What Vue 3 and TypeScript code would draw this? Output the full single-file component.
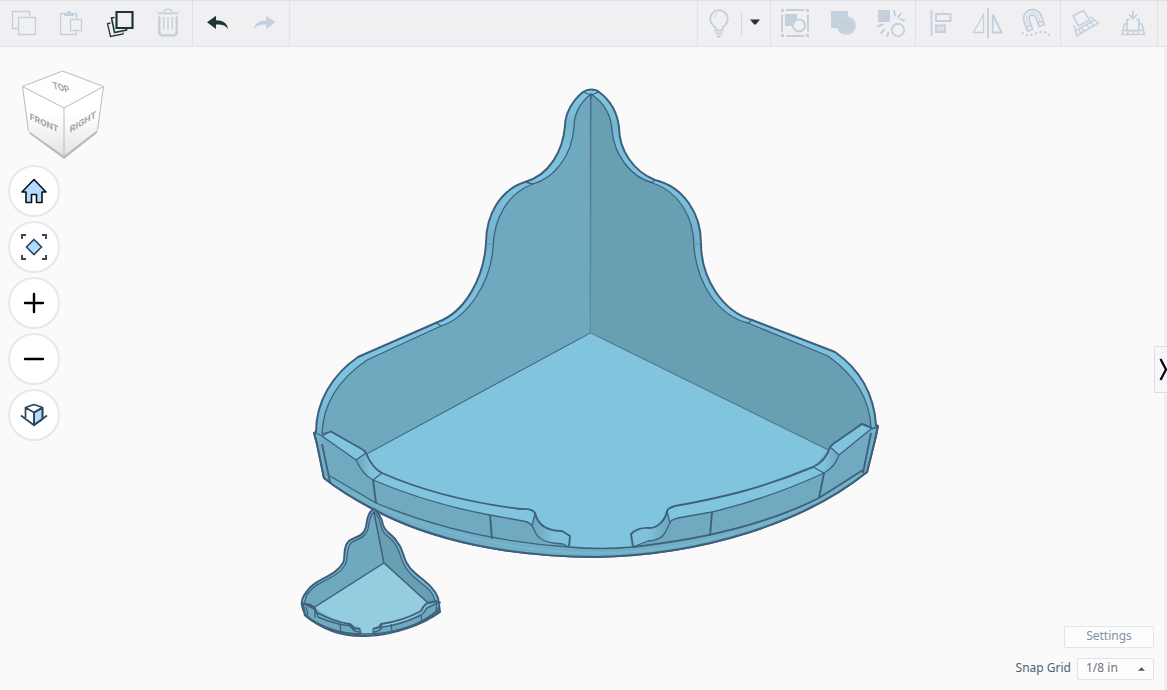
<script setup lang="ts">
import { computed, ref } from 'vue'

const snapOptions: string[] = ['1/16 in', '1/8 in', '1/4 in', '1/2 in']
const snapGrid = ref<string>('1/8 in')
const zoom = ref<number>(1)

const viewBox = computed<string>(() => {
  const width = 1164 / zoom.value
  const height = 643 / zoom.value
  return `${582 - width / 2} ${368.5 - height / 2} ${width} ${height}`
})

function zoomBy(factor: number): void {
  zoom.value = Math.min(4, Math.max(0.25, zoom.value * factor))
}
</script>

<template>
  <div class="editor">
    <header class="toolbar">
      <div class="group">
        <button class="tool" type="button" aria-label="Copy" disabled>
          <svg viewBox="0 1 48 45"><path d="M18.500 28.500h-6v-17h17v6M18.500 17.500h17v17h-17z" /></svg>
        </button>
        <button class="tool" type="button" aria-label="Paste" disabled>
          <svg viewBox="0 1 48 45">
            <path d="M22 34.500h-9.500v-21h4.500M24.500 13.500h4V19M22.500 19.500h11v11h-11zM22 34.500h6.500V31" />
            <path class="solid" d="M16 13h3c0-3 4-3 4 0h3v3h-10z" />
            <circle cx="21" cy="13" r="1" fill="#f0f0f2" />
          </svg>
        </button>
        <button class="tool active" type="button" aria-label="Duplicate and repeat">
          <svg viewBox="0 1 48 45">
            <path d="M20.500 12h16v16h-16z" stroke-width="2.200" />
            <path d="M18.500 17.500l-3 .5 3 14.500 12-2.500v-1" stroke-width="1.600" />
            <path d="M14.500 23l-3 .7 3 12.800 12.500-2.500v-1.500" stroke-width="1.300" />
          </svg>
        </button>
        <button class="tool" type="button" aria-label="Delete" disabled>
          <svg viewBox="0 1 48 45">
            <path d="M13.500 13.300h21" stroke-width="2" />
            <path d="M20 13c0-5 8-5 8 0M19.700 17v12.500M24 17v12.500M28.300 17v12.500" stroke-width="1.400" />
            <path d="M15.300 16.500V32q0 3.500 3.500 3.500h10.400q3.500 0 3.500-3.500V16.500" stroke-width="2.300" />
          </svg>
        </button>
      </div>
      <div class="group">
        <button class="tool active" type="button" aria-label="Undo">
          <svg viewBox="0 1 48 45"><path class="solid" d="M14 22.300 23 15.700v4.500c7 0 11.500 3 12 9-2.500-3.800-6-4.800-12-4.600V29z" /></svg>
        </button>
        <button class="tool" type="button" aria-label="Redo" disabled>
          <svg viewBox="0 1 48 45"><path class="solid" d="M34.300 22.300 25.300 15.700v4.500c-7 0-11.500 3-12 9 2.500-3.800 6-4.800 12-4.600V29z" /></svg>
        </button>
      </div>
      <div class="group tail">
        <button class="tool bulb" type="button" aria-label="Show all" disabled>
          <svg viewBox="0 1 43 45">
            <path d="M17.500 30.500v-3c-3-2.500-5.300-5-5.300-8.500a8.800 8.800 0 0 1 17.600 0c0 3.500-2.300 6-5.300 8.500v3z" stroke-width="1.900" />
            <path d="M16.500 17q1-2.500 3-3.300" stroke-width="1" />
            <path class="solid" d="M17 32.500h8l-.7 1.800h-6.600zM18 35.300h6q-1.500 2.700-3 2.700t-3-2.700z" />
          </svg>
        </button>
        <span class="divider"></span>
        <button class="tool active caret" type="button" aria-label="Visibility options">
          <svg viewBox="0 1 28 45"><path class="solid" d="M8 19.500h10l-4.200 5h-1.600z" /></svg>
        </button>
      </div>
      <div class="group">
        <button class="tool" type="button" aria-label="Group" disabled>
          <svg viewBox="0 1 48 45">
            <path d="M15 10h18M15 36h18M11 14.500v17M37 14.500v17" stroke-width="2" />
            <path class="solid" d="M10 9h3v3h-3zM35 9h3v3h-3zM10 34h3v3h-3zM35 34h3v3h-3zM14 14h12v5.500q-5 1.500-5 6.500h-7z" />
            <circle cx="28" cy="25.500" r="6" stroke-width="1.900" />
          </svg>
        </button>
        <button class="tool" type="button" aria-label="Union" disabled>
          <svg viewBox="0 1 48 45">
            <path class="solid" d="M12 11h17v17H12z" />
            <circle class="solid" cx="27.300" cy="25.500" r="9.500" />
            <circle cx="27.300" cy="25.500" r="7.800" class="ring" />
          </svg>
        </button>
        <button class="tool" type="button" aria-label="Ungroup" disabled>
          <svg viewBox="0 1 48 45">
            <path class="solid" d="M11 10h12v12H11z" />
            <circle cx="31" cy="30" r="6.200" stroke-width="1.900" />
            <path d="M27 11l1.300 4.500M33.700 13.500 31 17.300M37 20.500l-3.500-1.200M16 24.300l-5 2M17.300 29.700 14.300 33M21.300 32.500l-1 3.500" stroke-width="2" stroke-linecap="round" />
          </svg>
        </button>
      </div>
      <div class="group">
        <button class="tool" type="button" aria-label="Align" disabled>
          <svg viewBox="0 1 48 45">
            <path d="M15.500 10v26M20 14h14.500v7H20z" stroke-width="1.800" />
            <path d="M20 25.500h9v6.500h-9z" fill="#dae1e8" stroke-width="1.800" />
          </svg>
        </button>
        <button class="tool" type="button" aria-label="Mirror" disabled>
          <svg viewBox="0 1 48 45">
            <path d="M24 8v30.500" stroke-width="1.900" />
            <path d="M9.500 32.500h10v-18z" />
            <path d="M28.700 14.500v18h9z" stroke-width="1.900" />
          </svg>
        </button>
        <button class="tool" type="button" aria-label="Cruise" disabled>
          <svg viewBox="0 1 48 45">
            <g transform="translate(20.500 18.500) rotate(-20)">
              <path d="M-9 10V0a9 9 0 0 1 18 0v10H3.500V0a3.500 3.500 0 0 0-7 0v10zM-9 6h5.500M3.500 6H9" stroke-width="1.800" />
              <path d="M-6.200 5V0a6.200 6.200 0 0 1 12.400 0v5" stroke-width=".8" />
            </g>
            <path d="M10.700 33c3 3 6 3.200 11.500.8s11-3 14.800 1" stroke-width="2.400" stroke-linecap="round" stroke-dasharray=".1 4.600" />
          </svg>
        </button>
      </div>
      <div class="group">
        <button class="tool" type="button" aria-label="Workplane" disabled>
          <svg viewBox="0 1 48 45">
            <path d="M13 25 15.700 36 37.500 23 29 16.500M14 31 33.500 20M20 27l3.500 4.500M25 25l4.500 3M29 21l3 4M18 29l1.500 4.500" stroke-width="1.500" />
            <path class="sheet" d="M12 16 22.300 10.500 28.500 20 17.500 26z" stroke-width="1.600" />
          </svg>
        </button>
        <button class="tool" type="button" aria-label="Drop to workplane" disabled>
          <svg viewBox="0 1 48 45">
            <path d="M18 24h-2.500l-2.500 10.500h22.500L33 24h-3M14.500 30.500h19.500M19.500 30.500l-1 4M24 30.500v4M28.500 30.500l1 4" stroke-width="1.500" />
            <path d="M21 19.500h-3v11h12v-11h-3M24 11v7M20 14.500l4 4 4-4" stroke-width="1.700" />
          </svg>
        </button>
      </div>
      <div class="group end"></div>
    </header>

    <main class="stage">
      <svg class="scene" :viewBox="viewBox" role="img" aria-label="Corner shelf model on the workplane">
        <defs>
          <linearGradient id="rim" x1="0" y1="90" x2="0" y2="435" gradientUnits="userSpaceOnUse">
            <stop offset="0" stop-color="#83c9e4" /><stop offset=".1" stop-color="#76b7cf" />
            <stop offset=".25" stop-color="#80c6e1" /><stop offset=".44" stop-color="#74b2c9" />
            <stop offset=".65" stop-color="#7fc5e0" /><stop offset=".85" stop-color="#7ec3de" />
            <stop offset="1" stop-color="#74b2c9" />
          </linearGradient>
          <linearGradient id="notch" x1="0" x2="1">
            <stop offset="0" stop-color="#6ca5ba" /><stop offset=".6" stop-color="#80c2dc" />
          </linearGradient>
          <linearGradient id="notchRight" x1="1" x2="0">
            <stop offset="0" stop-color="#6ca5ba" /><stop offset=".6" stop-color="#80c2dc" />
          </linearGradient>
          <linearGradient id="corner" x1="0" y1="94" x2="0" y2="333" gradientUnits="userSpaceOnUse">
            <stop offset="0" stop-color="#40647f" /><stop offset=".4" stop-color="#4d7891" />
            <stop offset="1" stop-color="#5f90a8" />
          </linearGradient>
        </defs>

        <g class="shelf">
          <path class="outline" fill="url(#rim)" d="M591 89.500 C588 89.500 586 90 583 92 C573 100 565 113 565 126 C563 150 550 175 525 182 C500 190 486 215 486 243 C484 278 465 312 438 322 L358 357 C332 375 316 402 316 432 L314 433 L317 444 324 478 C340 491 354 499 373 509 C432 541 513 557 595 557 C704 555 805 522 867 472 L875 440 878 426 876 425 C874 395 862 371 835 352 L752 320 C722 311 701 278 701 243 C701 214 684 187 655 180 C633 171 619 150 619 127 C617 111 610 100 599 92 C597 90 594 89.500 591 89.500Z" />
          <path class="left-wall edge" d="M591 94 C581 102 574 113 574 127 C572 156 554 178 533 184 C508 193 494 218 493 247 C491 283 467 318 441 326 L367 360 C339 379 323 404 322 434 L330 432 367 454 590.500 333Z" />
          <path class="right-wall edge" d="M591 94 C603 102 611 114 612 130 C614 154 630 177 653 183 C677 191 694 215 694 247 C697 283 717 315 748 323 L828 356 C856 376 870 401 871 428 L861 424 828 450 590.500 333Z" />
          <path class="left-wall" d="M591 98 582 114V337L590.500 334Z" />
          <path class="right-wall" d="M591 98 600 114V337L590.500 334Z" />
          <path class="floor" d="M590.500 333 367 454 Q372 468 382 473 Q450 502 528 509 L535 513 C538 526 547 531 562 531 L570 536 569 548 Q600 550 633 548 L631 534 Q638 527 650 528 C656 528 665 522 667 511 L675 506 Q750 493 813 467 L828 450Z" />
          <path class="seam" d="M590.500 333 367 454" />
          <path class="seam soft" d="M590.500 333 828 450" />
          <path d="M591 94 590.500 333 590 333 590.400 94Z" fill="none" stroke="url(#corner)" stroke-width=".8" />

          <path class="base" d="M317 444 324 478 C340 491 354 499 373 509 C432 541 513 557 595 557 C704 555 805 522 867 472 L875 435 871 432 863 470 819 498 Q745 535 633 548 H569 Q465 540 376 503 L330 476 322 440Z" />
          <path class="front" d="M322 436 356 460 Q363 475 373 480 Q430 505 523 521 C540 523 529 544 563 544 L569 547 Q465 540 376 503 L330 476Z" />
          <path class="front" d="M871 429 839 455 Q835 468 824 473 Q760 500 678 518 C660 523 672 536 648 541 L633 547 Q745 535 819 498 L863 470Z" />
          <path class="gloss" d="M332 482C400 525 505 553 595 553S790 526 861 474" />
          <path class="outline hollow" d="M314 433 317 444 324 478 C340 491 354 499 373 509 C432 541 513 557 595 557 C704 555 805 522 867 472 L875 440 878 426" />

          <path class="lip" d="M322 435 332 431 360 448 Q364 450 366 453 Q372 468 382 473 C427 493 473 503 520 509 Q532 508 535 513 L532 526 Q529 521 523 521 L490 515 Q430 504 373 480 Q363 475 356 460Z" />
          <path fill="url(#notch)" d="M535 513 C538 526 547 531 562 531 L570 536 569 547 563 544 C545 544 535 538 535 531 L532 526Z" />
          <path class="lip" d="M871 428 862 424 833 444 830 447 Q826 461 813 467 C760 489 720 498 675 506 Q668 508 667 511 L670 523 Q674 519 678 518 L712 512 Q770 498 824 473 Q835 467 839 455Z" />
          <path fill="url(#notchRight)" d="M667 511 C665 522 656 528 650 528 Q638 527 631 534 L633 547 Q641 542 648 541 Q661 538 665 532 L670 523Z" />
          <path fill="url(#notch)" d="M366 453 356 460Q363 475 373 480L382 473Q372 468 366 453Z" />
          <path fill="url(#notchRight)" d="M830 447 839 455Q835 467 824 473L813 467Q826 461 830 447Z" />

          <path class="edge thick" d="M330 431 360 448Q364 450 366 453Q372 468 382 473C427 493 473 503 520 509Q532 508 535 513C538 526 547 531 562 531L570 536 569 547M872 428 862 424 833 444 830 447Q826 461 813 467C760 489 720 498 675 506Q668 508 667 511C665 522 656 528 650 528Q638 527 631 534L633 547" />
          <path class="edge" d="M314 432 322 436 356 460Q363 475 373 480Q430 504 490 515L523 521Q530 522 532 526C535 528 533 540 553 543L563 544 569 547M878 427 871 429 839 455Q835 467 824 473Q770 498 712 512L678 518Q670 520 670 523C665 532 665 540 648 541L633 547M322 436 332 431M356 460 366 453M373 480 382 473M532 526 535 513M839 455 830 447M824 473 813 467M670 523 667 511M871 429 878 426" />
          <path class="edge" d="M330 476 376 503Q465 540 569 547Q600 550 633 547" />
          <path class="edge thick" d="M322 444 330 482M633 547Q745 535 819 498L863 470M871 433 863 473M373 480 376 503M490 515 492 539M712 512 710 536M824 473 819 498" />
          <path class="edge" d="M583 92 591 95 599 92M525 182 533 184M655 180 651 183M435 322 441 326M752 320 748 323" />
          <path class="faint-edge" d="M486 243 493 245M701 242 694 245" />
        </g>

        <g class="shelf small">
          <path class="outline rim-fill" d="M374 509 C368 512 367 520 366 527 C363 538 353 537 349 541 C342 547 346 558 343 563 C335 577 315 579 308 590 C303 596 301 600 302 606 L305 615 C320 628 340 637 366 636 C395 635 424 624 440 612 L438 598 C435 588 424 581 415 573 C401 561 405 550 397 542 C393 534 386 534 383 525 C382 519 379 513 374 509Z" />
          <path class="left-wall edge" d="M374 512 C369 516 369 524 368 529 C364 540 355 539 351 543 C345 550 349 559 345 565 C337 579 317 581 310 591 Q304 597 305 606 L315 607 384 563Z" />
          <path class="right-wall edge" d="M374 512 C380 516 380 524 382 529 C385 537 392 537 395 544 C402 553 400 564 411 574 C420 584 434 589 435 602 L428 603 384 563Z" />
          <path class="pale-floor" d="M384 563 315 607 Q330 620 352 624 L361 628 363 634 H374 L374 629 Q404 625 421 612 L428 603Z" />
          <path class="edge" d="M384 563 315 607M384 563 428 603" />
          <path class="front edge" d="M303 603 314 609 Q318 614 318 617 Q334 624 351 626 Q353 632 360 632 L360 635 Q323 631 305 614Z" />
          <path class="front edge" d="M440 602 427 608 Q424 614 419 616 Q400 625 382 627 Q380 631 374 632 L375 635 Q412 631 438 610Z" />
          <path class="lip-line" d="M305 604 311 605Q316 608 316 612Q334 622 350 624L354 628 360 629M437 601 427 603Q423 606 421 611Q403 621 381 624L379 627 373 629" />
          <path class="edge" d="M315 610 315 618M340 625 341 633M391 624 392 632M421 615 422 622M348 624 355 631M382 624 379 631M360 629V633M373 629V633M304 615C320 629 340 634 365 634S422 625 439 611M437 601 436 612M306 607 308 615" />
        </g>
      </svg>

      <nav class="view-controls" aria-label="View controls">
        <svg class="view-cube" viewBox="8 63 112 98" role="img" aria-label="View cube">
          <defs>
            <linearGradient id="face" x1="0" y1="0" x2="0" y2="1">
              <stop offset=".4" stop-color="#fff" /><stop offset="1" stop-color="#e3e3e5" />
            </linearGradient>
          </defs>
          <path d="M28 128 64 151 98 127 97 133 64 159 30 134Z" fill="#b8b9bb" />
          <path d="M22.500 86.500 64 108V156L28.500 131Z" fill="url(#face)" />
          <path d="M103.500 86.500 64 108V156L97.500 130Z" fill="url(#face)" />
          <path d="M62.500 71 103.500 86.500 64 108 22.500 86.500Z" fill="#fefefe" />
          <path d="M62.500 71 22.500 86.500 28.500 131M62.500 71 103.500 86.500 97.500 130M22.500 86.500 64 108 103.500 86.500M64 108V156" fill="none" stroke="#b8babc" stroke-width="1" />
          <text transform="translate(62 91) rotate(16) skewX(30)">TOP</text>
          <text transform="translate(44 126) skewY(24)">FRONT</text>
          <text transform="translate(83 125) skewY(-31)">RIGHT</text>
        </svg>
        <button class="round" type="button" aria-label="Home view" @click="zoom = 1">
          <svg viewBox="0 0 52 52"><path d="M26 14.500 14 27h4v10.500h5.500V29.500h5v8H34V27h4z" fill="#b4dcff" stroke="#0c1115" stroke-width="1.600" stroke-linejoin="round" /></svg>
        </button>
        <button class="round" type="button" aria-label="Fit all in view">
          <svg viewBox="0 0 52 52" stroke="#2e475d" fill="none">
            <path d="M14 18v-4h4M34 14h4v4M38 34v4h-4M18 38h-4v-4" stroke-width="1.900" />
            <path d="M26 18.500 33.500 26 26 33.500 18.500 26z" fill="#b4dcff" stroke-width="1.600" />
          </svg>
        </button>
        <button class="round" type="button" aria-label="Zoom in" @click="zoomBy(1.25)">
          <svg viewBox="0 0 52 52"><path d="M17 26h18M26 17v18" stroke="#000" stroke-width="2.400" stroke-linecap="round" /></svg>
        </button>
        <button class="round" type="button" aria-label="Zoom out" @click="zoomBy(0.8)">
          <svg viewBox="0 0 52 52"><path d="M17 26h18" stroke="#000" stroke-width="2.400" stroke-linecap="round" /></svg>
        </button>
        <button class="round" type="button" aria-label="Switch to flat view">
          <svg viewBox="0 0 52 52" fill="none" stroke="#2e475d" stroke-width="1.700" stroke-linejoin="round">
            <path d="M26 23.500 34.500 19v11L26 36z" fill="#b4dcff" />
            <path d="M26 15.500 34.500 18.500 26 23.500 17.500 18.500zM17.500 18.500V30M34.500 18.500V30M26 23.500V36M13 26.500 26 36.300 39 26.500" />
          </svg>
        </button>
      </nav>

      <button class="handle" type="button" aria-label="Open shapes panel">
        <svg viewBox="0 0 12 45"><path d="M5.500 12 11 22.500 5.500 33" fill="none" stroke="#000" stroke-width="2.200" /></svg>
      </button>

      <div class="grid-controls">
        <button class="settings" type="button">Settings</button>
        <div class="snap">
          <label for="snap-grid">Snap Grid</label>
          <span class="select-wrap">
            <select id="snap-grid" v-model="snapGrid">
              <option v-for="option in snapOptions" :key="option" :value="option">{{ option }}</option>
            </select>
            <svg class="arrow" viewBox="0 0 8 4"><path d="M0 4 4 0 8 4z" fill="#4b5a66" /></svg>
          </span>
        </div>
      </div>
    </main>
  </div>
</template>

<style>
body {
  margin: 0;
  background: #fafafa;
}
</style>

<style scoped>
.editor {
  display: flex;
  flex-direction: column;
  min-height: 100vh;
  font-family: "Noto Sans", "Open Sans", sans-serif;
  background: #fafafa;
}
.toolbar {
  display: flex;
  box-sizing: border-box;
  border-top: 1px solid #dce2e7;
  border-bottom: 1px solid #dce2e7;
  background: #f0f0f2;
}
.group {
  display: flex;
  align-items: center;
  border-right: 1px solid #dce2e7;
}
.group.tail {
  margin-left: auto;
  border-left: 1px solid #dce2e7;
}
.group.end {
  width: 9px;
  border-right: 0;
}
.tool {
  width: 48px;
  height: 45px;
  padding: 0;
  border: 0;
  background: none;
  color: #c4d0db;
}
.tool.active {
  color: #213536;
  cursor: pointer;
}
.tool.bulb {
  width: 43px;
}
.tool.caret {
  width: 28px;
}
.tool svg,
.round svg,
.handle svg {
  display: block;
  width: 100%;
  height: 100%;
}
.tool svg {
  fill: none;
  stroke: currentColor;
  stroke-width: 1.3;
}
.tool .solid {
  fill: currentColor;
  stroke: none;
}
.tool .sheet {
  fill: #f0f0f2;
}
.tool .ring {
  stroke: #d3dce4;
  stroke-width: 1;
}
.divider {
  width: 1px;
  height: 24px;
  background: #d3dbe2;
}
.stage {
  position: relative;
  flex: 1;
  display: flex;
  min-height: 440px;
  border-right: 3px solid #f0f0f2;
}
.scene {
  flex: 1;
  min-width: 0;
  width: 100%;
  max-height: calc(100vh - 47px);
}
.shelf {
  stroke-linejoin: round;
}
.outline {
  stroke: #3d5f7d;
  stroke-width: 2;
}
.hollow {
  fill: none;
}
.edge {
  fill: none;
  stroke: #3f617c;
  stroke-width: 1.3;
}
.thick {
  stroke-width: 1.9;
}
.left-wall {
  fill: #6fa9bf;
}
.right-wall {
  fill: #689fb2;
}
.floor,
.lip {
  fill: #81c4de;
}
.front {
  fill: #70aac0;
}
.front.edge {
  stroke-width: 1.5;
}
.base {
  fill: #71afc7;
}
.gloss {
  fill: none;
  stroke: #7fb9cf;
  stroke-width: 1;
}
.seam {
  fill: none;
  stroke: #4d7088;
  stroke-width: 1;
}
.seam.soft {
  stroke: #5b8299;
}
.faint-edge {
  stroke: #5d93ad;
}
.rim-fill {
  fill: #78b9d2;
}
.pale-floor {
  fill: #95cde0;
}
.lip-line {
  fill: none;
  stroke: #3f617c;
  stroke-width: 2;
}
.view-controls {
  position: absolute;
  top: 16px;
  left: 8px;
  display: flex;
  flex-direction: column;
  align-items: flex-start;
  gap: 4px;
}
.view-cube {
  width: 112px;
  height: 98px;
}
.view-cube text {
  font: bold 9px Roboto, "Open Sans", sans-serif;
  fill: #a0a6ac;
  text-anchor: middle;
}
.round {
  box-sizing: border-box;
  width: 52px;
  height: 52px;
  padding: 0;
  border: 2px solid #e6e9ea;
  border-radius: 50%;
  background: #fff;
  cursor: pointer;
}
.round svg {
  width: 52px;
  height: 52px;
  margin: -2px;
}
.handle {
  position: absolute;
  top: 299px;
  right: -3px;
  box-sizing: border-box;
  width: 13px;
  height: 47px;
  padding: 0;
  border: 1px solid #dce0e6;
  border-right: 0;
  background: #f5f6f9;
  cursor: pointer;
}
.grid-controls {
  position: absolute;
  right: 10px;
  bottom: 10px;
  display: flex;
  flex-direction: column;
  align-items: flex-end;
  gap: 10px;
  font-size: 12px;
  color: #4d6075;
}
.settings {
  box-sizing: border-box;
  width: 90px;
  height: 22px;
  padding: 0 0 2px;
  border: 1px solid #dfe5ec;
  border-radius: 2px;
  background: #fdfdfe;
  font: inherit;
  line-height: 18px;
  color: #8592a0;
  cursor: pointer;
}
.snap {
  display: flex;
  align-items: center;
  gap: 6px;
}
.snap label {
  padding-bottom: 2px;
  line-height: 20px;
}
.select-wrap {
  position: relative;
  display: flex;
}
.snap select {
  appearance: none;
  box-sizing: border-box;
  width: 77px;
  height: 22px;
  padding: 0 20px 3px 8px;
  border: 1px solid #dfe3e8;
  border-radius: 2px;
  background: #fdfdfe;
  font: inherit;
  color: #6d747c;
}
.arrow {
  position: absolute;
  top: 9px;
  right: 9px;
  width: 7px;
  height: 4px;
  pointer-events: none;
}
</style>
